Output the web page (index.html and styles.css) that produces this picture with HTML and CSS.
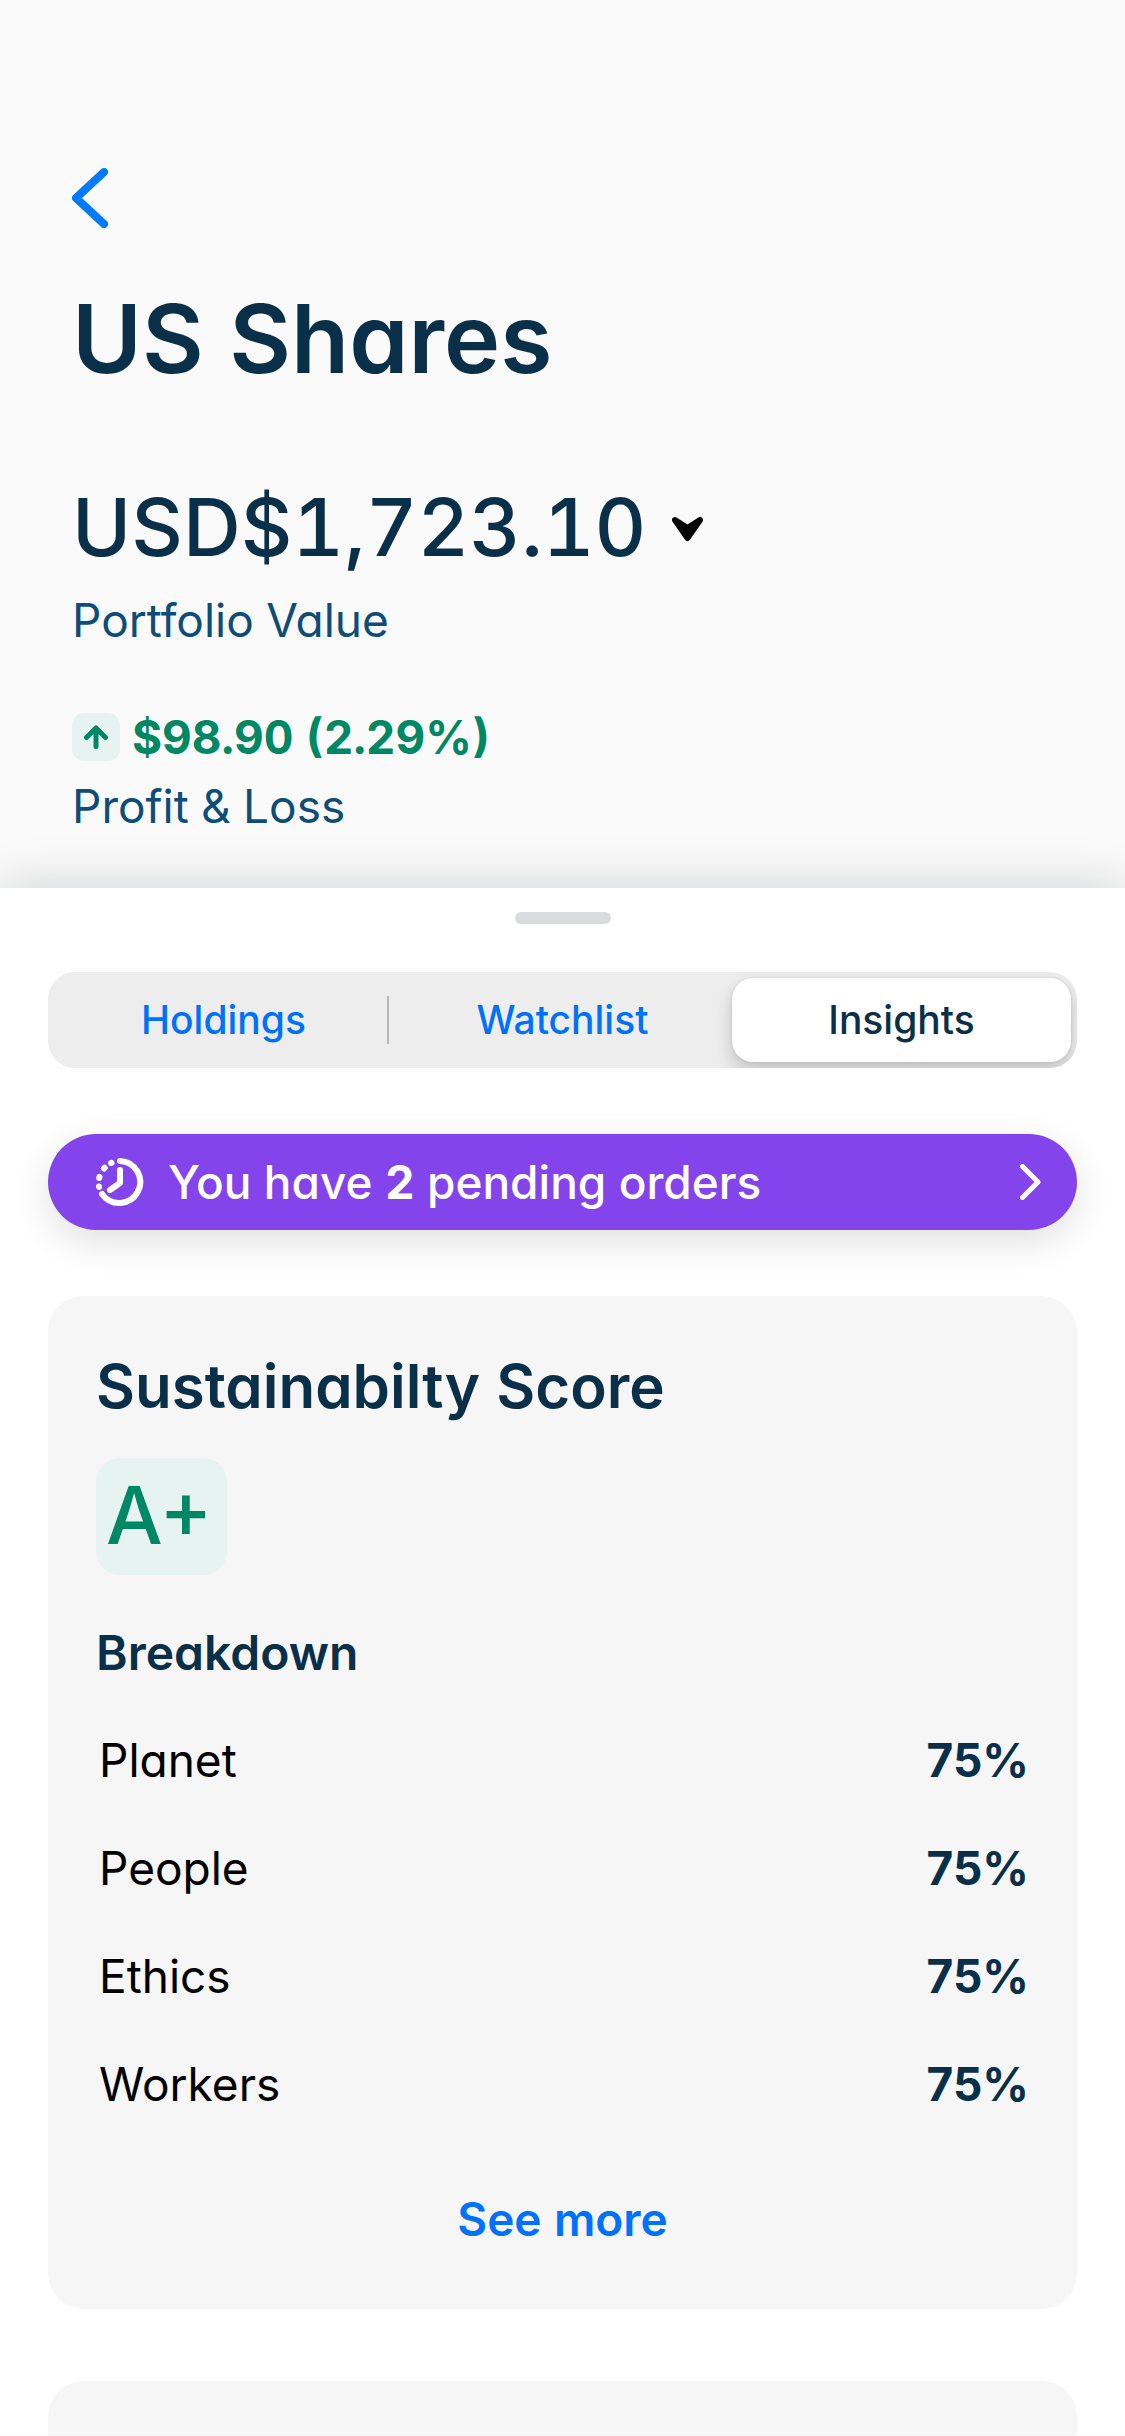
FILE: index.html
```html
<!DOCTYPE html>
<html lang="en">
<head>
<meta charset="utf-8">
<meta name="viewport" content="width=device-width, initial-scale=1">
<title>US Shares</title>
<link rel="stylesheet" href="styles.css">
</head>
<body>
<header class="summary">
  <button class="back" type="button" aria-label="Back">
    <svg width="36" height="60" viewBox="0 0 36 60" fill="none" stroke="#007aff" stroke-width="8" stroke-linecap="round" stroke-linejoin="round"><path d="M32 4 L4 30 L32 56"/></svg>
  </button>
  <h1 class="title">US Shares</h1>
  <button class="value" type="button">
    <span>USD$1,723.10</span>
    <svg width="31" height="30" viewBox="0 0 31 30" stroke="#000" stroke-width="6" stroke-linejoin="round" aria-hidden="true"><path d="M3 8 L15.500 16 L28 8 L15.500 26 Z"/></svg>
  </button>
  <p class="caption">Portfolio Value</p>
  <p class="gain">
    <span class="gain-badge"><svg width="24" height="24" viewBox="0 0 24 24" fill="none" stroke="#008764" stroke-width="5" stroke-linecap="round" stroke-linejoin="round" aria-hidden="true"><path d="M2.500 12.500 L12 3 L21.500 12.500 M12 3 V21.500"/></svg></span>
    <span>$98.90 (2.29%)</span>
  </p>
  <p class="caption">Profit &amp; Loss</p>
</header>
<main class="sheet">
  <div class="handle"></div>
  <nav class="tabs">
    <button class="tab tab-divided" type="button">Holdings</button>
    <button class="tab" type="button">Watchlist</button>
    <button class="tab tab-active" type="button" aria-current="page">Insights</button>
  </nav>
  <a class="banner" href="#orders">
    <svg width="48" height="48" viewBox="0 0 48 48" fill="none" stroke="#fff" stroke-width="6" stroke-linecap="round" stroke-linejoin="round" aria-hidden="true"><path d="M24 3 A21 21 0 1 1 6 36"/><path d="M24 12 V25 L14 32"/><path d="M15 5 L15.500 4.800 M8.700 9.800 L8 10.600 M3.500 18.800 L3.200 20 M3 28.500 L3.100 29"/></svg>
    <span class="banner-text">You have <b>2</b> pending orders</span>
    <svg width="21" height="36" viewBox="0 0 21 36" fill="none" stroke="#fff" stroke-width="5" stroke-linecap="round" stroke-linejoin="round" aria-hidden="true"><path d="M2.500 2.500 L18 18 L2.500 33.500"/></svg>
  </a>
  <section class="card">
    <h2 class="card-title">Sustainabilty Score</h2>
    <div class="grade">A+</div>
    <h3 class="subtitle">Breakdown</h3>
    <table class="scores">
      <tr><th scope="row">Planet</th><td>75%</td></tr>
      <tr><th scope="row">People</th><td>75%</td></tr>
      <tr><th scope="row">Ethics</th><td>75%</td></tr>
      <tr><th scope="row">Workers</th><td>75%</td></tr>
    </table>
    <a class="more" href="#more">See more</a>
  </section>
  <section class="card card-next"></section>
</main>
</body>
</html>
```
FILE: styles.css
```css
* { box-sizing: border-box; }
body {
  margin: 0;
  background: #fafafa;
  color: #0a2f48;
  font-family: Inter, "Liberation Sans", sans-serif;
  font-size: 46px;
  line-height: 60px;
  font-feature-settings: "cv11", "tnum";
}
h1, h2, h3, p { margin: 0; }
button {
  border: 0;
  padding: 0;
  background: none;
  color: inherit;
  font: inherit;
  font-feature-settings: inherit;
  cursor: pointer;
}
a { text-decoration: none; }
svg { display: block; flex: none; }

.summary { padding: 168px 72px 52px; }
.back { display: block; }
.title { margin-top: 55px; font-size: 95px; line-height: 112px; font-weight: 600; }
.value {
  display: flex;
  align-items: center;
  gap: 26px;
  margin-top: 84px;
  font-size: 80px;
  line-height: 96px;
  font-weight: 500;
}
.caption { margin-top: 15px; color: #0d4d78; }
.gain {
  display: flex;
  align-items: center;
  gap: 12px;
  margin-top: 57px;
  color: #008764;
  font-weight: 700;
}
.gain + .caption { margin-top: 9px; }
.gain-badge {
  display: grid;
  place-items: center;
  width: 48px;
  height: 48px;
  border-radius: 12px;
  background: #e6f3f0;
}

.sheet {
  padding: 24px 48px 0;
  background: #fff;
  box-shadow: 0 0 48px rgba(10, 20, 30, 0.18);
}
.handle { width: 96px; height: 12px; margin: 0 auto; border-radius: 6px; background: #d9dbdf; }
.tabs {
  display: flex;
  height: 96px;
  margin-top: 48px;
  padding: 6px;
  border-radius: 27px;
  background: #ededed;
  overflow: hidden;
}
.tab {
  flex: 1;
  color: #0071f9;
  font-size: 39px;
  font-weight: 500;
  font-feature-settings: normal;
}
.tab-divided {
  background: linear-gradient(#b5b5b5, #b5b5b5) right 4px center / 2px 48px no-repeat;
}
.tab-active {
  border-radius: 21px;
  background: #fff;
  color: #0a2f48;
  box-shadow: 0 0 3px rgba(0, 0, 0, 0.12), 0 9px 18px rgba(0, 0, 0, 0.18);
}

.banner {
  display: flex;
  align-items: center;
  gap: 24px;
  height: 96px;
  margin-top: 66px;
  padding: 0 36px 0 48px;
  border-radius: 48px;
  background: #8344eb;
  color: #fff;
  font-weight: 500;
  box-shadow: 0 12px 36px rgba(0, 0, 0, 0.12);
}
.banner-text { flex: 1; }

.card {
  margin-top: 66px;
  padding: 54px 48px 60px;
  border-radius: 36px;
  background: #f6f6f6;
}
.card-title { font-size: 60px; line-height: 72px; font-weight: 600; }
.grade {
  width: max-content;
  margin-top: 36px;
  padding: 3px 15px 6px 10px;
  border-radius: 24px;
  background: #e6f3f0;
  color: #008764;
  font-size: 80px;
  line-height: 108px;
  font-weight: 500;
}
.subtitle { margin-top: 48px; font-size: 48px; line-height: 60px; font-weight: 600; }
.scores { width: 100%; margin-top: 23px; border-collapse: collapse; }
.scores th { height: 108px; padding: 0 0 0 3px; color: #000; font-weight: 400; text-align: left; }
.scores td { padding: 0; font-weight: 700; font-feature-settings: normal; text-align: right; }
.more {
  display: block;
  width: max-content;
  margin: 51px auto 0;
  color: #0071f9;
  font-weight: 600;
}
.card-next {
  margin-top: 72px;
  padding: 54px 0 0;
  border-radius: 36px 36px 0 0;
}
```
